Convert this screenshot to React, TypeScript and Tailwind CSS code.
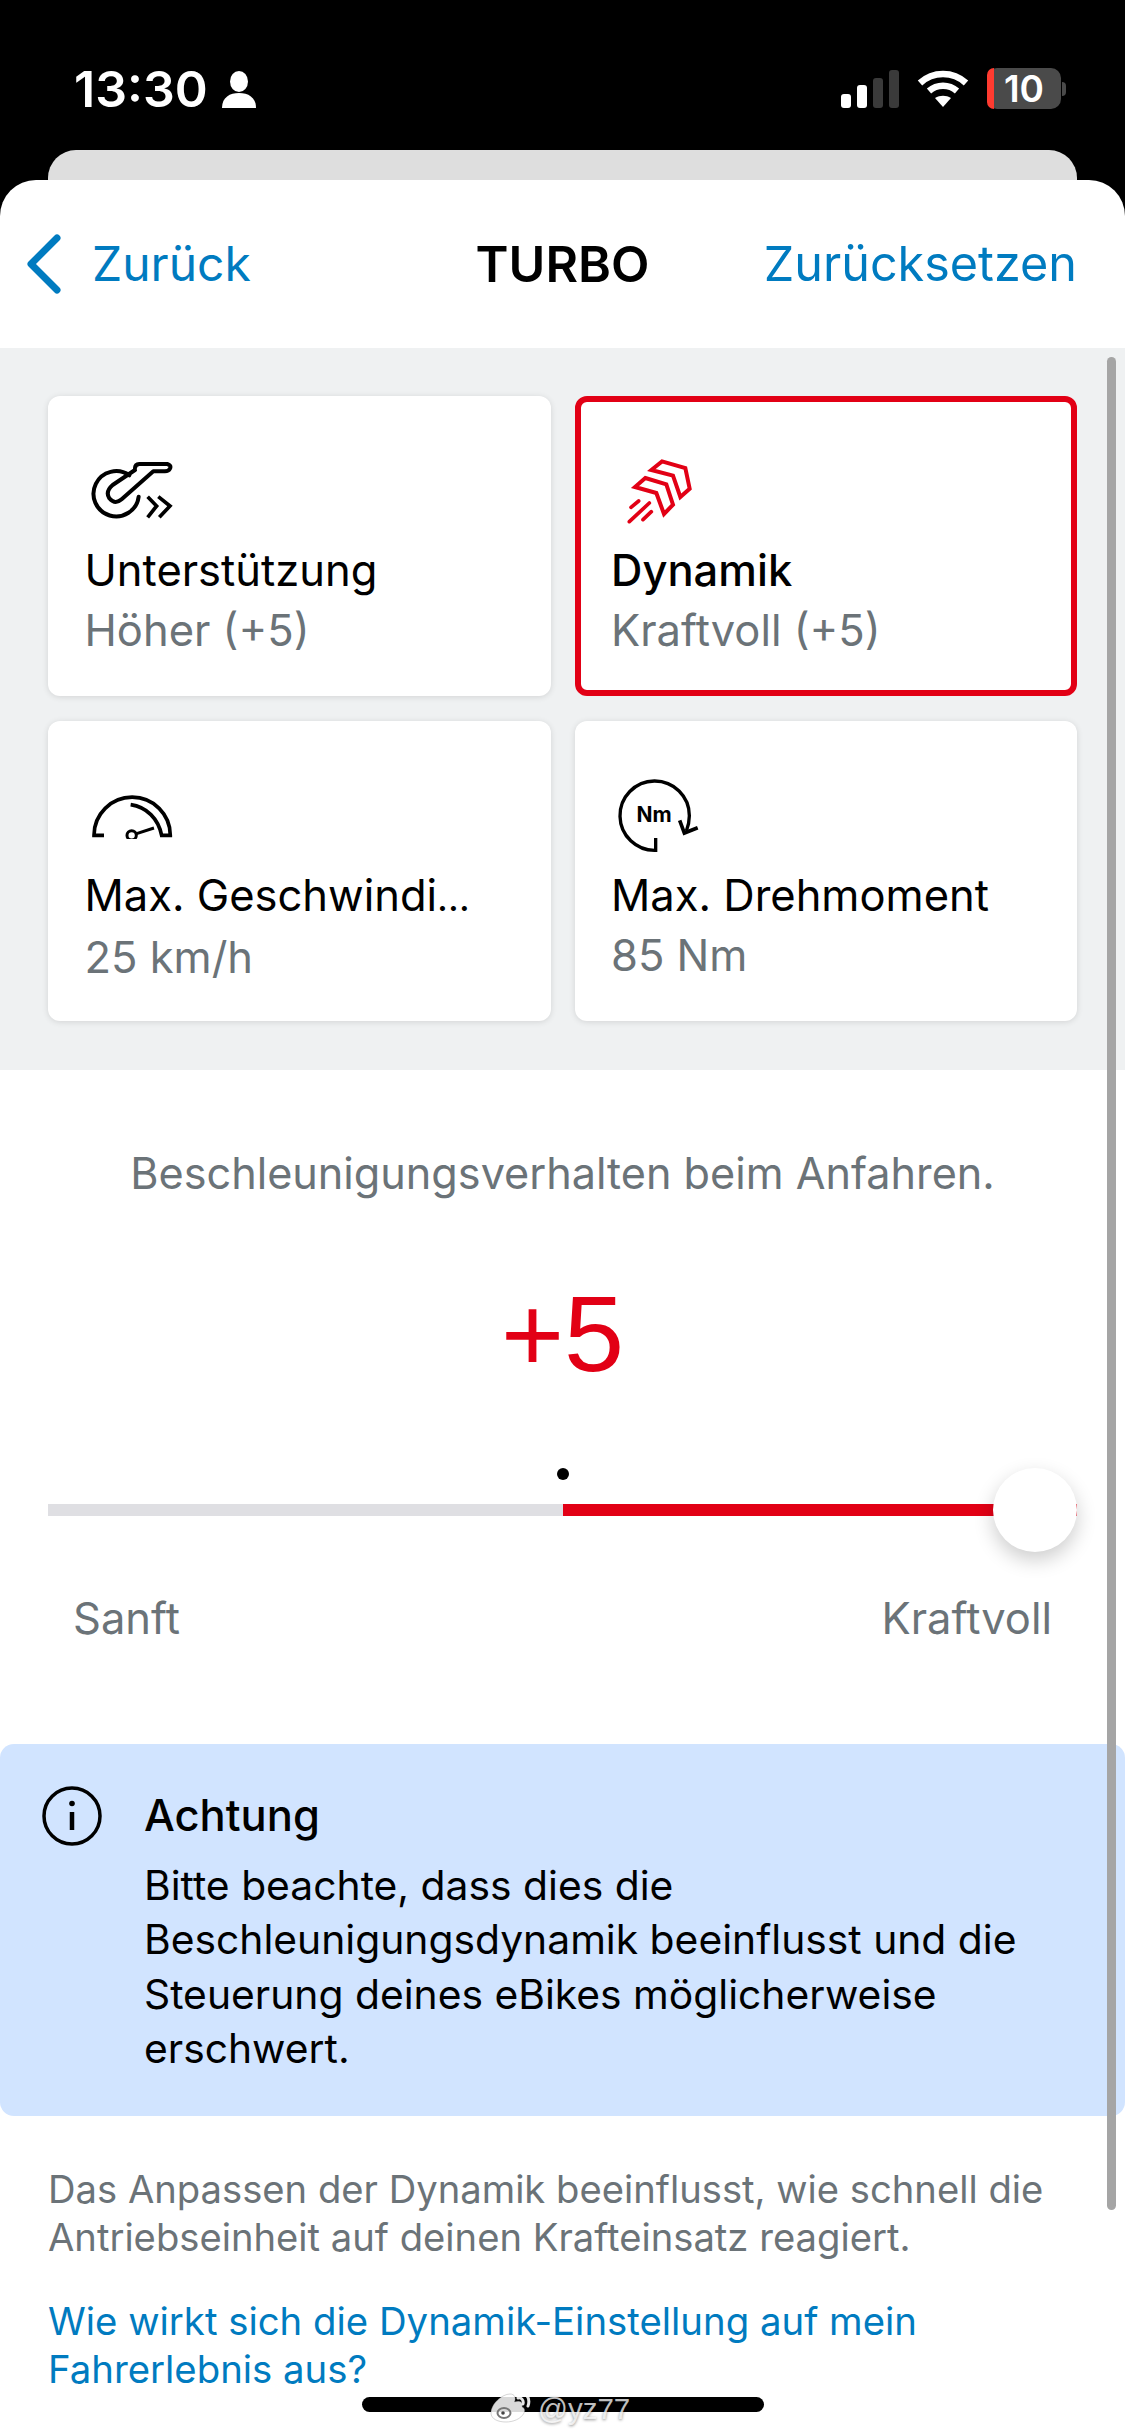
import React from "react";

const font = { fontFamily: "Inter, 'Liberation Sans', sans-serif" };

function Card({ icon, title, sub, active }: { icon: React.ReactNode; title: React.ReactNode; sub: string; active?: boolean }) {
  return (
    <div className={active
      ? "h-[300px] rounded-[12px] bg-white border-[6px] border-[#e20015] pl-[30.5px] pt-[50px]"
      : "h-[300px] rounded-[12px] bg-white shadow-[0_1px_6px_rgba(0,0,0,0.12)] pl-[36.5px] pt-[56px]"}>
      <div className="h-[88px] flex items-start">{icon}</div>
      <div className={active ? "text-[43.5px] leading-[60px] text-black font-medium whitespace-nowrap" : "text-[43.5px] leading-[60px] text-black whitespace-nowrap"}>{title}</div>
      <div className="text-[43.5px] leading-[60px] text-[#6b7378] whitespace-nowrap">{sub}</div>
    </div>
  );
}

const AssistIcon = () => (
  <svg width="83.3" height="60" viewBox="150 210 250 180" fill="none" stroke="#000" strokeWidth="12" strokeLinejoin="round" strokeLinecap="round" className="ml-[5.5px] mt-[8px]">
    <path d="M268 256 A 68 68 0 1 0 296 320" />
    <path d="M285 235 Q 285 223 298 222 H 382 Q 395 226 390 236 Q 386 244 375 244 H 340 L 245 328 Q 225 345 208 325 Q 195 305 218 285 L 285 240" />
    <path d="M323 320 L 350 348 L 323 382 M 355 320 L 390 348 L 358 382" strokeWidth="11" strokeLinecap="butt" strokeLinejoin="miter" />
  </svg>
);

const DynIcon = () => (
  <svg width="65" height="66.7" viewBox="170 205 195 200" fill="none" stroke="#e20015" strokeWidth="12" strokeLinejoin="miter" className="ml-[15.5px] mt-[6px]">
    <path d="M275 215 L 345 235 L 358 297 L 330 322 L 308 258 L 243 241 Z" />
    <path d="M225 265 L 288 284 L 308 345 L 281 373 L 258 310 L 194 292 Z" />
    <path d="M182 353 L 205 334 M 177 396 L 237 340 M 218 390 L 243 366" strokeWidth="11" strokeLinecap="round" />
  </svg>
);

const GaugeIcon = () => (
  <svg width="83.3" height="46.7" viewBox="90 95 250 140" fill="none" stroke="#000" strokeWidth="11" className="ml-[5.5px] mt-[15px]">
    <path d="M132 225 H 102 A 113 113 0 0 1 331 225 H 305 C 295 175 260 140 212 133" />
    <circle cx="215" cy="225" r="14" strokeWidth="9" />
    <path d="M230 220 L 282 203" strokeWidth="9" />
  </svg>
);

function TorqueIcon() {
  return (
    <div className="relative w-[82px] h-[77px] ml-[7px] mt-[1px]">
      <svg width="81.7" height="76.7" viewBox="85 55 245 230" fill="none" stroke="#000" strokeWidth="10" className="absolute left-0 top-0">
        <path d="M198 235 V 272 A 104 104 0 1 1 299 168 Q 299 190 290 214" />
        <path d="M270 182 L 284 220 L 324 204" strokeWidth="11" />
      </svg>
      <div className="absolute left-[15px] top-[25px] w-[42px] text-center text-[21px] leading-[24px] font-bold text-black">Nm</div>
    </div>
  );
}

function BackChevron() {
  return (
    <svg width="36" height="60" viewBox="0 0 36 60" fill="none" stroke="#007bc0" strokeWidth="7" strokeLinecap="round" strokeLinejoin="round">
      <path d="M31 4 L 5 30 L 31 56" />
    </svg>
  );
}

export default function App() {
  return (
    <div className="relative w-[1125px] h-[2436px] overflow-hidden bg-black" style={font}>
      {/* status bar */}
      <div className="h-[150px] flex items-start justify-between pl-[74px] pr-[59px] pt-[64px] text-white">
        <div className="flex items-center gap-[14px]">
          <span className="text-[50px] leading-[50px] font-semibold">13:30</span>
          <svg width="34" height="37" viewBox="0 0 34 37" fill="#fff"><ellipse cx="17" cy="10.5" rx="9" ry="10.5" /><path d="M0 37 C0 26 8 22 17 22 C26 22 34 26 34 37 Z" /></svg>
        </div>
        <div className="flex items-center gap-[18px] mt-[4px]">
          <div className="flex items-end gap-[6px] h-[38px]">
            <div className="w-[10px] h-[14px] rounded-[3px] bg-white" />
            <div className="w-[10px] h-[23px] rounded-[3px] bg-white" />
            <div className="w-[10px] h-[30px] rounded-[3px] bg-[#3a3a3a]" />
            <div className="w-[10px] h-[38px] rounded-[3px] bg-[#3a3a3a]" />
          </div>
          <svg width="52" height="38" viewBox="0 0 52 38" fill="none" stroke="#fff" strokeWidth="6.5">
            <path d="M3 13 C 16 1 36 1 49 13" />
            <path d="M12 21 C 20 14 32 14 40 21" />
            <path d="M26 37 L 18 28 C 23 25 29 25 34 28 Z" fill="#fff" stroke="none" />
          </svg>
          <div className="flex items-center">
            <div className="w-[74px] h-[41px] rounded-[10px] bg-[#4a4a4a] flex items-center">
              <div className="w-[7px] h-[41px] rounded-l-[10px] bg-[#ff3b30]" />
              <span className="flex-1 text-center pr-[7px] text-[37px] leading-[41px] font-semibold text-white">10</span>
            </div>
            <div className="w-[4px] h-[14px] rounded-r-full bg-[#4a4a4a] ml-[1px]" />
          </div>
        </div>
      </div>

      {/* stacked sheet behind */}
      <div className="mx-[48px] h-[60px] -mb-[30px] rounded-t-[28px] bg-[#dedede]" />

      {/* sheet */}
      <div className="relative rounded-t-[36px] bg-white h-[2256px] overflow-hidden">
        {/* nav */}
        <div className="h-[168px] grid grid-cols-[1fr_auto_1fr] items-center px-[48px]">
          <div className="-ml-[22px] flex items-center gap-[30px] text-[#007bc0] text-[48px]">
            <BackChevron />
            <span>Zurück</span>
          </div>
          <span className="text-[50px] font-semibold text-black">TURBO</span>
          <span className="justify-self-end text-[48.5px] text-[#007bc0]">Zurücksetzen</span>
        </div>

        {/* cards */}
        <div className="bg-[#eff1f2] px-[48px] pt-[48px] pb-[49px] grid grid-cols-2 gap-x-[24px] gap-y-[25px]">
          <Card icon={<AssistIcon />} title="Unterstützung" sub="Höher (+5)" />
          <Card active icon={<DynIcon />} title="Dynamik" sub="Kraftvoll (+5)" />
          <Card icon={<GaugeIcon />} title={<>Max. Geschwindi<span className="text-[38px]">…</span></>} sub="25 km/h" />
          <Card icon={<TorqueIcon />} title="Max. Drehmoment" sub="85 Nm" />
        </div>

        {/* setting */}
        <div className="pt-[73px] text-center text-[43.2px] leading-[60px] text-[#6b7378]">Beschleunigungsverhalten beim Anfahren.</div>
        <div className="mt-[71px] text-center text-[108px] leading-[120px] text-[#e20015]" style={{ fontFamily: "'Liberation Sans', sans-serif" }}>+5</div>

        {/* slider */}
        <div className="relative mx-[48px] mt-[110px] h-[12px] bg-[#dfdfe3] w-[1029px]">
          <div className="absolute left-[515px] right-0 top-0 bottom-0 bg-[#e20015]" />
          <div className="absolute left-[509px] -top-[36px] w-[12px] h-[12px] rounded-full bg-black" />
          <div className="absolute left-[945px] -top-[36px] w-[84px] h-[84px] rounded-full bg-white shadow-[0_8px_20px_rgba(0,0,0,0.2)]" />
        </div>
        <div className="mt-[72px] px-[73px] flex justify-between text-[43.5px] leading-[60px] text-[#6b7378]">
          <span>Sanft</span>
          <span>Kraftvoll</span>
        </div>

        {/* info */}
        <div className="mt-[96px] h-[372px] rounded-[14px] bg-[#d1e4ff] flex pl-[42px] pt-[42px]">
          <svg width="60" height="60" viewBox="0 0 60 60" fill="none" stroke="#000" strokeWidth="3.5" className="shrink-0">
            <circle cx="30" cy="30" r="28" />
            <path d="M30 26 V 44" strokeWidth="4.5" />
            <circle cx="30" cy="17.5" r="2.8" fill="#000" stroke="none" />
          </svg>
          <div className="ml-[42px] mt-[2px] text-black">
            <div className="text-[43.5px] leading-[54px] font-medium mb-[16px]">Achtung</div>
            <div className="text-[40.8px] leading-[54.3px] w-[920px]">
              Bitte beachte, dass dies die<br />Beschleunigungsdynamik beeinflusst und die<br />Steuerung deines eBikes möglicherweise<br />erschwert.
            </div>
          </div>
        </div>

        {/* footer */}
        <div className="mt-[49px] px-[48px] text-[38.2px] leading-[48px] text-[#6b7378]">
          Das Anpassen der Dynamik beeinflusst, wie schnell die<br />Antriebseinheit auf deinen Krafteinsatz reagiert.
        </div>
        <div className="mt-[36px] px-[48px] text-[38.35px] leading-[48px] text-[#007bc0]">
          Wie wirkt sich die Dynamik-Einstellung auf mein<br />Fahrerlebnis aus?
        </div>

        {/* scroll indicator */}
        <div className="absolute right-[9px] top-[177px] w-[9px] h-[1853px] rounded-full bg-[#a5a5a5]" />
      </div>

      {/* home bar */}
      <div className="absolute left-[362px] top-[2397px] w-[402px] h-[15px] rounded-full bg-black" />

      {/* watermark */}
      <div className="absolute left-[490px] top-[2389px] flex items-start gap-[6px] text-white/75 [text-shadow:0_1px_3px_rgba(0,0,0,0.45)]">
        <svg width="42" height="34" viewBox="0 0 42 34" fill="none">
          <path d="M1 24 C 1 15 12 5 20 5 C 25 5 26 9 24.5 13 C 30 11 33 13 32 18 C 35 19 35 22 34 24 C 31 30 23 33 16 33 C 8 33 1 30 1 24 Z" fill="#ffffff" fillOpacity="0.85" stroke="#8a8a8a" strokeOpacity="0.35" strokeWidth="1" />
          <ellipse cx="14" cy="24" rx="6.5" ry="5" stroke="#777777" strokeWidth="2" />
          <circle cx="13" cy="24" r="1.8" fill="#444444" />
          <path d="M27 2 C 35 1 41 9 38 17 M 28 9 C 31 8 34 11 33 15" stroke="#ffffff" strokeOpacity="0.9" strokeWidth="3" strokeLinecap="round" />
        </svg>
        <span className="mt-[3px] text-[29.5px] leading-[34px]" style={{ fontFamily: "'Liberation Sans', sans-serif" }}>@yz77</span>
      </div>
    </div>
  );
}
